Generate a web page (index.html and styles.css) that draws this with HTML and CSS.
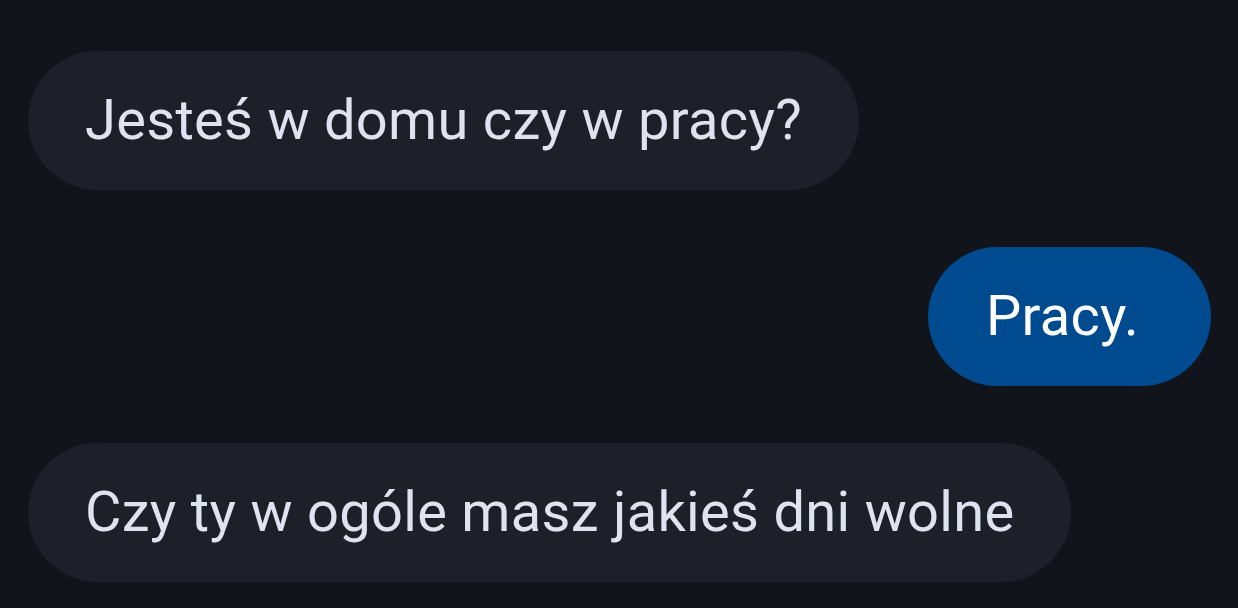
FILE: index.html
```html
<!DOCTYPE html>
<html lang="pl">

<head>
    <meta charset="UTF-8">
    <meta name="viewport" content="width=device-width, initial-scale=1.0">
    <title>Wiadomości</title>
    <link rel="stylesheet" href="styles.css">
</head>

<body>
    <div class="chat">
        <div class="row">
            <div class="bubble incoming">Jesteś w domu czy w pracy?</div>
        </div>
        <div class="row outgoing-row">
            <div class="bubble outgoing">Pracy.</div>
        </div>
        <div class="row">
            <div class="bubble incoming">Czy ty w ogóle masz jakieś dni wolne</div>
        </div>
    </div>
</body>

</html>
```

FILE: styles.css
```css
body {
    margin: 0;
    font-family: Roboto, "Noto Sans", sans-serif;
    background-color: #12141c;
    color: #dfe3ef;
}

.chat {
    display: flex;
    flex-direction: column;
    gap: 57px;
    padding: 51px 27px 0 28px;
}

.row {
    display: flex;
}

.outgoing-row {
    justify-content: flex-end;
}

.bubble {
    height: 139px;
    line-height: 139px;
    padding: 0 57px;
    border-radius: 70px;
    font-size: 56px;
    letter-spacing: 0.3px;
    white-space: nowrap;
}

.incoming {
    background-color: #1e2029;
}

.outgoing {
    padding: 0 72px 0 58px;
    background-color: #004a8f;
    color: #ffffff;
}
```
